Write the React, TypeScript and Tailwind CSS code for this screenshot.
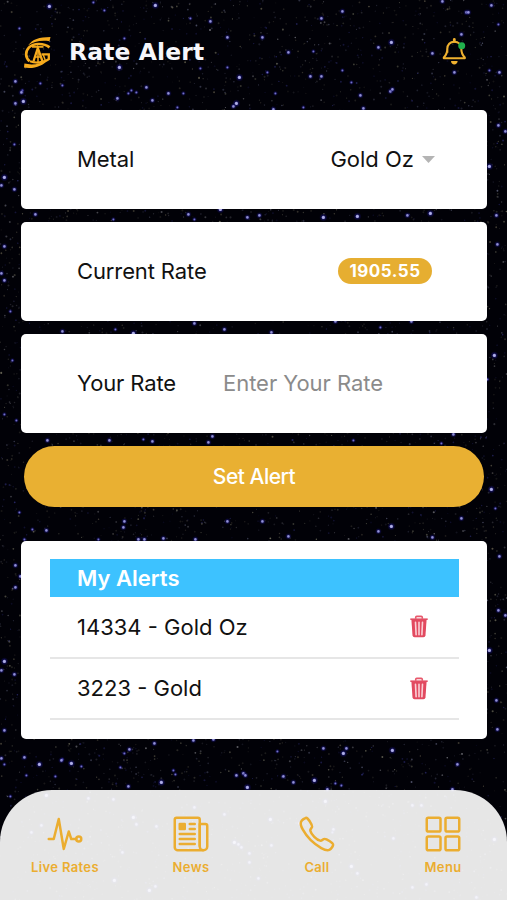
import type { ReactNode } from "react";
import { IoCallOutline, IoGridOutline, IoNewspaperOutline, IoPulseOutline } from "react-icons/io5";

// Bright stars: x, y, brightness (1 faint, 2 normal, 3 strong)
const STARS: number[][] = [
  [49, 6, 3], [155, 5, 3], [210, 21, 2], [190, 18, 1], [227, 37, 2], [19, 28, 1], [119, 67, 3], [239, 77, 3],
  [15, 81, 2], [22, 90, 1], [21, 92, 2], [23, 101, 3], [15, 103, 2], [117, 98, 2], [146, 87, 2], [152, 100, 2],
  [236, 103, 3], [233, 106, 2], [168, 93, 2], [183, 93, 1], [131, 90, 1], [128, 93, 1], [136, 92, 1], [200, 68, 1],
  [227, 67, 1], [93, 2, 1], [104, 10, 1], [40, 83, 1], [62, 85, 1], [124, 38, 1], [342, 11, 2], [321, 18, 2],
  [262, 37, 2], [391, 42, 3], [378, 47, 2], [288, 52, 2], [313, 51, 1], [432, 53, 2], [461, 34, 2], [466, 12, 2],
  [468, 12, 2], [491, 5, 2], [442, 1, 2], [498, 24, 1], [454, 72, 2], [499, 72, 2], [267, 72, 1], [310, 76, 2],
  [321, 76, 2], [342, 70, 1], [351, 82, 1], [360, 95, 2], [390, 91, 2], [392, 89, 2], [273, 109, 2], [303, 107, 1],
  [363, 108, 2], [275, 93, 1], [489, 70, 1], [4, 177, 3], [1, 185, 2], [14, 189, 2], [14, 144, 1], [35, 214, 2],
  [113, 219, 1], [188, 214, 2], [220, 209, 3], [247, 217, 2], [194, 219, 1], [4, 246, 2], [1, 273, 2], [4, 280, 2],
  [10, 311, 1], [194, 323, 2], [224, 329, 2], [115, 329, 1], [177, 107, 1], [498, 125, 2], [505, 131, 2], [489, 166, 3],
  [496, 215, 2], [497, 244, 2], [259, 215, 2], [323, 217, 3], [357, 216, 3], [407, 215, 2], [430, 213, 3], [380, 327, 1],
  [335, 321, 2], [411, 321, 2], [62, 331, 2], [133, 333, 3], [12, 360, 1], [4, 414, 1], [16, 420, 1], [47, 440, 2],
  [109, 440, 2], [143, 439, 1], [152, 441, 2], [212, 436, 2], [208, 442, 2], [19, 512, 1], [32, 529, 1], [46, 530, 2],
  [124, 521, 2], [123, 527, 2], [227, 521, 2], [98, 539, 1], [138, 539, 2], [144, 539, 2], [163, 538, 2], [195, 539, 2],
  [24, 539, 1], [271, 332, 2], [494, 355, 3], [487, 379, 1], [353, 440, 1], [453, 434, 2], [441, 443, 1], [491, 489, 3],
  [461, 518, 2], [391, 526, 3], [378, 531, 2], [432, 537, 2], [262, 521, 2], [288, 536, 2], [495, 508, 1], [15, 565, 2],
  [20, 576, 2], [15, 587, 2], [4, 661, 3], [1, 670, 2], [14, 674, 2], [4, 730, 2], [154, 743, 2], [193, 740, 2],
  [213, 739, 2], [129, 749, 2], [124, 753, 1], [24, 757, 2], [1, 758, 2], [62, 759, 1], [499, 556, 2], [498, 610, 2],
  [505, 615, 2], [489, 650, 3], [496, 700, 2], [497, 729, 2], [323, 748, 2], [346, 748, 2], [343, 753, 3], [392, 750, 3],
  [277, 751, 1], [4, 764, 1], [39, 764, 3], [61, 760, 2], [71, 763, 3], [26, 775, 1], [81, 766, 1], [55, 776, 1],
  [128, 786, 2], [161, 782, 3], [175, 774, 1], [173, 770, 1], [120, 767, 1], [10, 796, 1], [236, 775, 2], [243, 773, 2],
  [245, 775, 2], [247, 787, 3], [283, 776, 2], [293, 782, 2], [314, 780, 3], [335, 783, 1], [341, 785, 1], [457, 764, 2],
  [452, 789, 2], [327, 789, 2], [46, 795, 3], [88, 798, 2], [113, 799, 2], [41, 825, 2], [31, 832, 2], [133, 817, 3],
  [136, 824, 2], [156, 826, 2], [122, 852, 2], [114, 880, 3], [149, 890, 3], [155, 886, 2], [234, 842, 3], [238, 844, 2],
  [241, 847, 2], [249, 853, 2], [249, 862, 2], [194, 807, 2], [224, 814, 2], [325, 801, 3], [270, 819, 3], [299, 823, 2],
  [333, 829, 2], [332, 832, 1], [271, 845, 2], [258, 878, 2], [351, 866, 3], [357, 873, 2], [393, 838, 2], [412, 805, 2],
  [421, 805, 2], [426, 884, 2], [412, 887, 2], [494, 839, 3], [476, 897, 2],
];

function buildDust() {
  let seed = 4217;
  const rand = () => {
    seed = (seed * 1664525 + 1013904223) % 4294967296;
    return seed / 4294967296;
  };
  const tones = ["#8c8a72", "#6f7390", "#9a9aa0", "#3a3a90", "#77705a"];
  return Array.from({ length: 7500 }, () => ({
    x: rand() * 507,
    y: rand() * 900,
    r: 0.5 + rand() * 0.55,
    o: 0.14 + rand() * rand() * 0.6,
    fill: tones[Math.floor(rand() * tones.length)],
  }));
}

const DUST = buildDust();

function StarField() {
  return (
    <svg className="absolute inset-0 h-[900px] w-[507px]" viewBox="0 0 507 900" aria-hidden="true">
      <defs>
        <radialGradient id="halo">
          <stop offset="0" stopColor="#3f3cc8" stopOpacity="0.9" />
          <stop offset="0.5" stopColor="#201b8c" stopOpacity="0.5" />
          <stop offset="1" stopColor="#0c0860" stopOpacity="0" />
        </radialGradient>
      </defs>
      <rect width="507" height="900" fill="#010107" />
      {DUST.map((d, i) => (
        <circle key={i} cx={d.x} cy={d.y} r={d.r} fill={d.fill} opacity={d.o} />
      ))}
      {STARS.map(([x, y, b], i) => (
        <g key={i}>
          <circle cx={x + 0.4} cy={y + 0.4} r={1.8 + b * 0.8} fill="url(#halo)" />
          <circle cx={x + 0.4} cy={y + 0.4} r={0.7 + b * 0.3} fill="#c4c4f4" opacity={0.25 + b * 0.2} />
        </g>
      ))}
    </svg>
  );
}

function Logo() {
  return (
    <svg className="h-[31px] w-[28px]" viewBox="0 0 28 31" fill="none" stroke="#f6ab1d" aria-hidden="true">
      <path d="M4 8.600C8.500 2.200 15 .2 26.500 0L25.500 4.200C16 3 9.400 4.800 4 8.600Z" fill="#f6ab1d" stroke="none" />
      <path d="M.4 26.600C8 28.400 16.500 27.400 24 22.200C19 29.400 10 32 0 30.600Z" fill="#f6ab1d" stroke="none" />
      <path d="M25.500 10.400C20 5.800 9.500 6 5 10.400C.8 14.800 1.400 20.600 5.600 24.200" strokeWidth="2.700" />
      <path d="M6 24.200C11 26.300 20 26.200 24.800 22.200V17.400H17.500" strokeWidth="2.300" />
      <path d="M8 9.900H19.500" strokeWidth="1.700" />
      <path d="M9.400 24.500L13.800 11L18.600 24.500" strokeWidth="2.300" />
      <path d="M10.500 20H17M14 15V25M19 17L21.500 24" strokeWidth="1.500" />
    </svg>
  );
}

function Bell() {
  return (
    <svg className="h-[28px] w-[25px]" viewBox="0 0 25 28" fill="none" aria-hidden="true">
      <path
        d="M5.300 15.800V11.800C5.300 7.600 8 4.700 12.300 4.700S19.300 7.600 19.300 11.800C19.300 16 20.400 18.200 22.800 20.600V21.300H1.800V20.600C4.200 18.200 5.300 16 5.300 11.800"
        stroke="#eeb02f"
        strokeWidth="2.100"
        strokeLinejoin="round"
      />
      <path d="M12.300 4.400V2.500" stroke="#eeb02f" strokeWidth="2.800" strokeLinecap="round" />
      <path d="M9 24.100H15.600C15.600 26.300 14 27.600 12.300 27.600S9 26.300 9 24.100Z" fill="#eeb02f" />
      <circle cx="19.700" cy="8.800" r="3.500" fill="#20b04c" />
    </svg>
  );
}

function Trash() {
  return (
    <svg className="h-[23px] w-[18px]" viewBox="0 0 18 23" fill="none" aria-hidden="true">
      <path d="M5.700 3.700V2.500Q5.700 1.400 6.800 1.400H11.200Q12.300 1.400 12.300 2.500V3.700" stroke="#e8596c" strokeWidth="1.600" />
      <path d="M.3 3.400H17.700V5H.3Z" fill="#e35166" />
      <path d="M1.400 4.500H16.600L15.500 20.300Q15.300 22.200 13.400 22.200H4.600Q2.700 22.200 2.500 20.300Z" fill="#e24a60" />
      <path d="M5.500 7.200L6.100 19.800M9 7.200V19.800M12.500 7.200L11.900 19.800" stroke="#fbd0d6" strokeWidth="1.600" strokeLinecap="round" />
    </svg>
  );
}

function Card({ label, children }: { label: string; children: ReactNode }) {
  return (
    <section className="flex h-[98.500px] items-center rounded-[5px] bg-white pl-14">
      <span className="whitespace-nowrap text-[22px] leading-7 tracking-[-0.12px]">{label}</span>
      {children}
    </section>
  );
}

function AlertRow({ text }: { text: string }) {
  return (
    <li className="flex h-[61.500px] items-center justify-between border-b-2 border-[#e6e6e6] pr-[31px] pl-[27px]">
      <span className="text-[22px] leading-7">{text}</span>
      <button aria-label="Delete">
        <Trash />
      </button>
    </li>
  );
}

function Tab({ label, children }: { label: string; children: ReactNode }) {
  return (
    <a className="flex w-[126px] flex-col items-center gap-[5px] text-[#ebad30]">
      {children}
      <span className="text-[13px] font-semibold leading-4 tracking-[0.35px]">{label}</span>
    </a>
  );
}

export default function App() {
  return (
    <div className="relative h-[900px] w-[507px] overflow-hidden bg-black font-['Inter','Liberation_Sans',sans-serif] text-[#111]">
      <StarField />
      <div className="relative flex h-full flex-col">
        <header className="flex h-[110px] items-start justify-between pt-[37px] pr-[40px] pl-[24px]">
          <div className="flex items-center gap-[17px]">
            <Logo />
            <h1 className="-mt-[2px] font-['DejaVu_Sans',sans-serif] text-[23.500px] font-bold leading-[30px] tracking-[0.1px] text-[#f7f7fb]">
              Rate Alert
            </h1>
          </div>
          <Bell />
        </header>

        <main className="flex flex-col gap-[13.500px] pr-[20px] pl-[21px]">
          <Card label="Metal">
            <div className="ml-auto flex items-center gap-2 pr-[52px]">
              <span className="text-[22px] leading-7">Gold Oz</span>
              <svg className="h-[7px] w-[13px]" viewBox="0 0 13 7" aria-hidden="true">
                <path d="M0 0H13L6.500 7Z" fill="#b4b4b4" />
              </svg>
            </div>
          </Card>
          <Card label="Current Rate">
            <span className="mr-[55px] ml-auto flex h-[26px] w-[94px] items-center justify-center rounded-full bg-[#e6ae31] text-[17px] font-bold tracking-[0.5px] text-white">
              1905.55
            </span>
          </Card>
          <Card label="Your Rate">
            <span className="ml-[47px] whitespace-nowrap text-[22px] leading-7 tracking-[-0.05px] text-[#8b8b8b]">Enter Your Rate</span>
          </Card>
          <button className="mx-[3px] h-[60.500px] rounded-full bg-[#e9b032] text-[21px] font-medium tracking-[-0.5px] text-white">
            Set Alert
          </button>

          <section className="mt-[21px] h-[198px] rounded-[5px] bg-white pt-[18px] pr-[28px] pl-[29px]">
            <h2 className="flex h-[38px] items-center bg-[#3dc2ff] pl-[27px] text-[22px] font-semibold text-white">My Alerts</h2>
            <ul>
              <AlertRow text="14334 - Gold Oz" />
              <AlertRow text="3223 - Gold" />
            </ul>
          </section>
        </main>

        <nav className="mt-auto flex h-[110px] items-start rounded-t-[52px] bg-[#fdfdfd]/91 pt-[24px] pl-[2px]">
          <Tab label="Live Rates">
            <IoPulseOutline className="size-[40px]" />
          </Tab>
          <Tab label="News">
            <IoNewspaperOutline className="size-[40px]" />
          </Tab>
          <Tab label="Call">
            <IoCallOutline className="size-[40px]" />
          </Tab>
          <Tab label="Menu">
            <IoGridOutline className="size-[40px]" />
          </Tab>
        </nav>
      </div>
    </div>
  );
}
